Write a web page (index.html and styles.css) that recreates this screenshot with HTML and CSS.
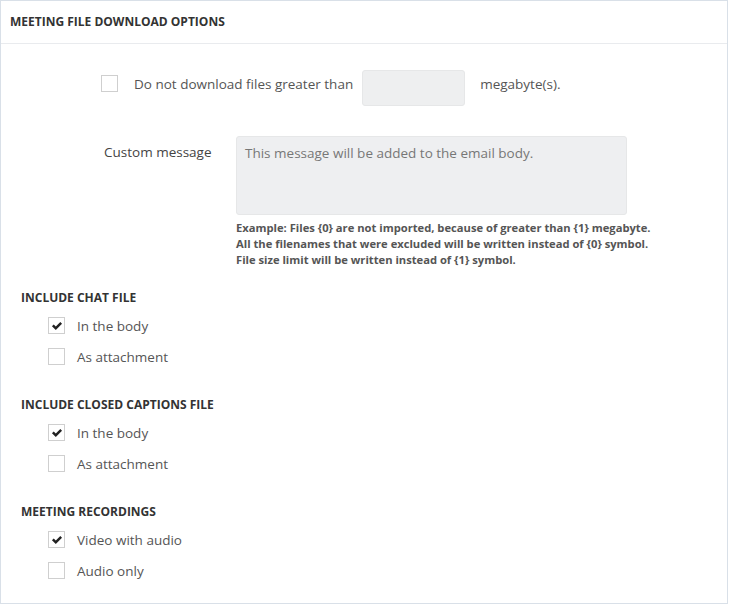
FILE: index.html
```html
<!DOCTYPE html>
<html lang="en">
<head>
    <meta charset="UTF-8">
    <meta name="viewport" content="width=device-width, initial-scale=1.0">
    <title>Meeting file download options</title>
    <link rel="stylesheet" href="styles.css">
</head>
<body>
    <div class="panel">
        <div class="panel-heading">Meeting file download options</div>
        <div class="panel-body">
            <div class="limit-row">
                <span class="box"></span>
                <span class="limit-text">Do not download files greater than</span>
                <input class="size-input" type="text">
                <span class="limit-unit">megabyte(s).</span>
            </div>

            <div class="message-row">
                <label class="message-label" for="msg">Custom message</label>
                <div class="message-field">
                    <textarea id="msg" class="message-input" placeholder="This message will be added to the email body."></textarea>
                    <p class="help">Example: Files {0} are not imported, because of greater than {1} megabyte.<br>
                    All the filenames that were excluded will be written instead of {0} symbol.<br>
                    File size limit will be written instead of {1} symbol.</p>
                </div>
            </div>

            <div class="sections">
                <div class="section">
                    <div class="section-title">Include chat file</div>
                    <div class="check-row"><span class="box"><svg viewBox="0 0 16 16"><path d="M1.3 8.4 L3.6 6.1 L6.4 8.8 L12.4 2.8 L14.7 5.1 L6.4 13.3 Z"/></svg></span>In the body</div>
                    <div class="check-row"><span class="box"></span>As attachment</div>
                </div>

                <div class="section">
                    <div class="section-title">Include closed captions file</div>
                    <div class="check-row"><span class="box"><svg viewBox="0 0 16 16"><path d="M1.3 8.4 L3.6 6.1 L6.4 8.8 L12.4 2.8 L14.7 5.1 L6.4 13.3 Z"/></svg></span>In the body</div>
                    <div class="check-row"><span class="box"></span>As attachment</div>
                </div>

                <div class="section">
                    <div class="section-title">Meeting recordings</div>
                    <div class="check-row"><span class="box"><svg viewBox="0 0 16 16"><path d="M1.3 8.4 L3.6 6.1 L6.4 8.8 L12.4 2.8 L14.7 5.1 L6.4 13.3 Z"/></svg></span>Video with audio</div>
                    <div class="check-row"><span class="box"></span>Audio only</div>
                </div>
            </div>
        </div>
    </div>
</body>
</html>
```

FILE: styles.css
```css
body {
    margin: 0;
    font-family: "Open Sans", "Noto Sans", sans-serif;
    color: #555;
    background: #fff;
}
.panel {
    width: 726px;
    height: 602px;
    border: 1px solid #d9e0e8;
}
.panel-heading {
    height: 42px;
    line-height: 42px;
    padding-left: 9px;
    border-bottom: 1px solid #e9ebee;
    font-size: 12px;
    font-weight: bold;
    text-transform: uppercase;
    color: #333;
}
.panel-body {
    padding-top: 26px;
}
.box {
    display: inline-flex;
    align-items: center;
    justify-content: center;
    box-sizing: border-box;
    width: 17px;
    height: 17px;
    border: 1px solid #cfcfcf;
    background: #fff;
    flex: none;
}
.box svg {
    width: 12px;
    height: 12px;
    fill: #222;
}
.limit-row {
    display: flex;
    align-items: flex-start;
    padding-left: 100px;
    font-size: 13.5px;
    line-height: 20px;
}
.limit-row .box {
    margin-top: 5px;
}
.limit-text {
    margin-top: 4px;
    margin-left: 16px;
}
.size-input {
    box-sizing: border-box;
    width: 103px;
    height: 36px;
    margin-left: 9px;
    border: 1px solid #e6e7e8;
    border-radius: 3px;
    background: #eeeff0;
}
.limit-unit {
    margin-top: 4px;
    margin-left: 15px;
}
.message-row {
    display: flex;
    margin-top: 30px;
}
.message-label {
    width: 132px;
    padding-left: 103px;
    padding-top: 7px;
    font-size: 13.5px;
    color: #444;
}
.message-input {
    display: block;
    box-sizing: border-box;
    width: 391px;
    height: 79px;
    margin: 0;
    padding: 7px 8px;
    border: 1px solid #e6e7e8;
    border-radius: 3px;
    background: #eeeff1;
    font-family: inherit;
    font-size: 13.5px;
    resize: none;
}
.message-input::placeholder {
    color: #777;
}
.help {
    margin: 5px 0 0;
    font-size: 11.2px;
    font-weight: bold;
    line-height: 16px;
    color: #555;
}
.sections {
    display: flex;
    flex-direction: column;
    gap: 23px;
    margin-top: 20px;
    padding-left: 20px;
}
.section-title {
    line-height: 20px;
    margin-bottom: 2px;
    font-size: 12px;
    font-weight: bold;
    text-transform: uppercase;
    color: #333;
}
.check-row {
    display: flex;
    align-items: center;
    height: 31px;
    padding-left: 27px;
    font-size: 13.5px;
}
.check-row .box {
    margin-right: 12px;
}
```
